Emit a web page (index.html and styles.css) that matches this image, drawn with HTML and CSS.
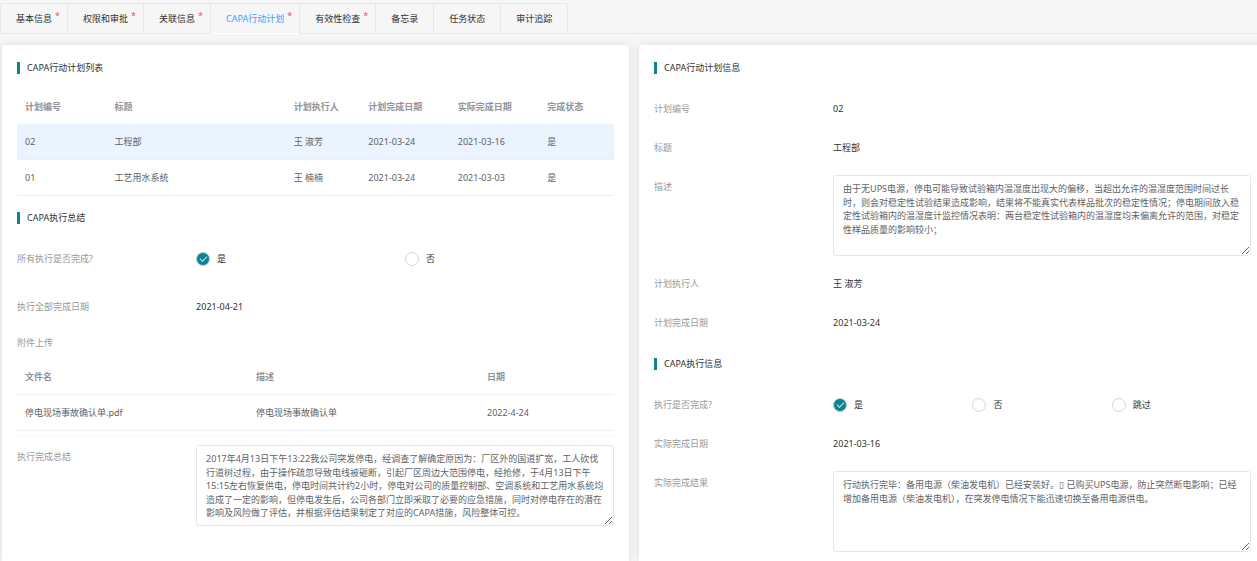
FILE: index.html
```html
<!doctype html>
<html lang="zh-CN">
    <head>
        <title>CAPA行动计划</title>
        <meta charset="UTF-8"/>
        <meta name="viewport" content="width=device-width, initial-scale=1"/>
        <link rel="stylesheet" href="styles.css">
    </head>
    <body>
        <nav class="tabs">
            <button class="tab">基本信息<span class="required">*</span></button>
            <button class="tab">权限和审批<span class="required">*</span></button>
            <button class="tab">关联信息<span class="required">*</span></button>
            <button class="tab active">CAPA行动计划<span class="required">*</span></button>
            <button class="tab">有效性检查<span class="required">*</span></button>
            <button class="tab">备忘录</button>
            <button class="tab">任务状态</button>
            <button class="tab">审计追踪</button>
        </nav>

        <main class="columns">
            <section class="card">
                <h2>CAPA行动计划列表</h2>
                <table class="plan-table">
                    <thead>
                        <tr>
                            <th class="col-normal">计划编号</th>
                            <th class="col-wide">标题</th>
                            <th class="col-small">计划执行人</th>
                            <th class="col-normal">计划完成日期</th>
                            <th class="col-normal">实际完成日期</th>
                            <th class="col-small">完成状态</th>
                        </tr>
                    </thead>
                    <tbody>
                        <tr class="selected">
                            <td>02</td>
                            <td>工程部</td>
                            <td>王 淑芳</td>
                            <td>2021-03-24</td>
                            <td>2021-03-16</td>
                            <td>是</td>
                        </tr>
                        <tr>
                            <td>01</td>
                            <td>工艺用水系统</td>
                            <td>王 楠楠</td>
                            <td>2021-03-24</td>
                            <td>2021-03-03</td>
                            <td>是</td>
                        </tr>
                    </tbody>
                </table>

                <h2>CAPA执行总结</h2>
                <div class="row row-spaced" role="radiogroup" aria-labelledby="all-done">
                    <span class="label" id="all-done">所有执行是否完成?</span>
                    <div class="radios">
                        <label><input type="radio" name="all-done" checked/>是</label>
                        <label><input type="radio" name="all-done"/>否</label>
                    </div>
                </div>
                <div class="row">
                    <span class="label">执行全部完成日期</span>
                    <span class="value">2021-04-21</span>
                </div>
                <div class="upload-label">附件上传</div>
                <table class="file-table">
                    <thead>
                        <tr>
                            <th class="col-file">文件名</th>
                            <th class="col-file">描述</th>
                            <th>日期</th>
                        </tr>
                    </thead>
                    <tbody>
                        <tr>
                            <td>停电现场事故确认单.pdf</td>
                            <td>停电现场事故确认单</td>
                            <td>2022-4-24</td>
                        </tr>
                    </tbody>
                </table>
                <div class="row">
                    <label class="label" for="summary">执行完成总结</label>
                    <textarea id="summary">2017年4月13日下午13:22我公司突发停电，经调查了解确定原因为：厂区外的国道扩宽，工人砍伐行道树过程，由于操作疏忽导致电线被砸断，引起厂区周边大范围停电，经抢修，于4月13日下午15:15左右恢复供电，停电时间共计约2小时，停电对公司的质量控制部、空调系统和工艺用水系统均造成了一定的影响，但停电发生后，公司各部门立即采取了必要的应急措施，同时对停电存在的潜在影响及风险做了评估，并根据评估结果制定了对应的CAPA措施，风险整体可控。</textarea>
                </div>
            </section>

            <section class="card">
                <h2>CAPA行动计划信息</h2>
                <div class="row">
                    <span class="label">计划编号</span>
                    <span class="value">02</span>
                </div>
                <div class="row">
                    <span class="label">标题</span>
                    <span class="value">工程部</span>
                </div>
                <div class="row">
                    <label class="label" for="description">描述</label>
                    <textarea id="description">由于无UPS电源，停电可能导致试验箱内温湿度出现大的偏移，当超出允许的温湿度范围时间过长时，则会对稳定性试验结果造成影响，结果将不能真实代表样品批次的稳定性情况；停电期间放入稳定性试验箱内的温湿度计监控情况表明：两台稳定性试验箱内的温湿度均未偏离允许的范围，对稳定性样品质量的影响较小；</textarea>
                </div>
                <div class="row">
                    <span class="label">计划执行人</span>
                    <span class="value">王 淑芳</span>
                </div>
                <div class="row">
                    <span class="label">计划完成日期</span>
                    <span class="value">2021-03-24</span>
                </div>

                <h2>CAPA执行信息</h2>
                <div class="row" role="radiogroup" aria-labelledby="done">
                    <span class="label" id="done">执行是否完成?</span>
                    <div class="radios">
                        <label><input type="radio" name="done" checked/>是</label>
                        <label><input type="radio" name="done"/>否</label>
                        <label><input type="radio" name="done"/>跳过</label>
                    </div>
                </div>
                <div class="row">
                    <span class="label">实际完成日期</span>
                    <span class="value">2021-03-16</span>
                </div>
                <div class="row">
                    <label class="label" for="result">实际完成结果</label>
                    <textarea id="result">行动执行完毕：备用电源（柴油发电机）已经安装好。▯ 已购买UPS电源，防止突然断电影响；已经增加备用电源（柴油发电机），在突发停电情况下能迅速切换至备用电源供电。</textarea>
                </div>
            </section>
        </main>
    </body>
</html>
```
FILE: styles.css
```css
* {
    box-sizing: border-box;
}
body {
    display: flex;
    flex-direction: column;
    min-height: 100vh;
    margin: 0;
    padding-top: 3px;
    overflow-x: hidden;
    font-family: "Noto Sans", "Noto Sans CJK SC", sans-serif;
    font-size: 9px;
    line-height: 1.5;
    color: #606266;
    background-color: #f6f6f6;
}
button, input, textarea {
    font: inherit;
}
.tabs {
    display: flex;
    flex-shrink: 0;
    height: 31px;
    border-bottom: 1px solid #e4e7ed;
}
.tab {
    position: relative;
    height: 31px;
    padding: 1px 15px 0;
    color: #303133;
    background: none;
    border: 1px solid #e4e7ed;
    border-right: 0;
    cursor: pointer;
}
.tab:first-child {
    border-top-left-radius: 3px;
}
.tab:last-child {
    border-right: 1px solid #e4e7ed;
    border-top-right-radius: 3px;
}
.tab.active {
    color: #409eff;
    border-bottom-color: #ffffff;
}
.required {
    position: absolute;
    top: 5px;
    right: 7px;
    color: #ff4d4f;
}
.columns {
    display: grid;
    flex-grow: 1;
    grid-template-columns: 1fr 1fr;
    gap: 10px;
    margin: 11px -9px 0 2px;
}
.card {
    padding: 1px 15px 0;
    background-color: #ffffff;
    border-radius: 3px 3px 0 0;
    box-shadow: 0 0 9px rgba(0, 0, 0, 0.1);
}
h2 {
    margin: 16px 0 15px;
    padding-left: 7px;
    border-left: 3px solid #0b8494;
    font-size: 9px;
    font-weight: normal;
    line-height: 12px;
    color: #303133;
}
table {
    width: 100%;
    table-layout: fixed;
    border-collapse: separate;
    border-spacing: 0;
}
th, td {
    height: 36px;
    padding: 0 8px;
    text-align: left;
    border-bottom: 1px solid #ebeef5;
}
th {
    font-weight: 700;
    color: #909399;
}
.plan-table th {
    height: 35px;
    border-bottom: 0;
}
.selected td {
    background-color: #ebf3ff;
}
.col-normal {
    width: 15%;
}
.col-wide {
    width: 30%;
}
.col-small {
    width: 12.5%;
}
.col-file {
    width: 38.7%;
}
.file-table {
    padding-bottom: 5px;
    border-bottom: 1px solid #f7f8fa;
}
.row {
    display: grid;
    grid-template-columns: 30% 1fr;
    min-height: 39px;
    line-height: 39px;
}
.row-spaced {
    margin-bottom: 9px;
}
.label, .upload-label {
    color: #999999;
}
.upload-label {
    line-height: 33px;
}
.value {
    color: #303133;
}
.radios {
    display: flex;
}
.radios label {
    display: flex;
    flex: 1;
    align-items: center;
    color: #303133;
}
input[type=radio] {
    display: grid;
    place-items: center;
    width: 14px;
    height: 14px;
    margin: 0 7px 0 0;
    appearance: none;
    background-color: #ffffff;
    border: 1px solid #d5d7dc;
    border-radius: 50%;
}
input[type=radio]:checked {
    background-color: #0b8494;
    border-color: #b5cfd4;
}
input[type=radio]:checked::before {
    content: "";
    width: 6px;
    height: 3px;
    margin-bottom: 2px;
    border: solid #c5e2e6;
    border-width: 0 0 1px 1px;
    transform: rotate(-45deg);
}
textarea {
    display: block;
    width: 100%;
    height: 81px;
    margin: 8px 0;
    padding: 6px 9px;
    overflow: hidden;
    line-height: 1.5;
    color: #606266;
    background-color: #ffffff;
    border: 1px solid #e4e6ea;
    border-radius: 3px;
    resize: vertical;
}
```
